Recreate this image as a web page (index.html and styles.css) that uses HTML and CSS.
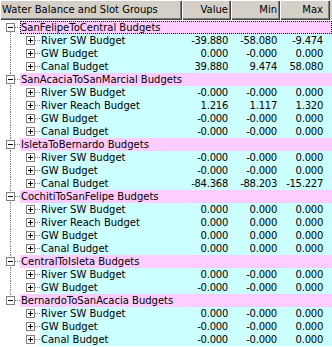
FILE: index.html
```html
<!DOCTYPE html>
<html>
<head>
<meta charset="utf-8">
<link rel="stylesheet" href="styles.css">
</head>
<body>
<div class="tree">
  <div class="hdr">
    <div class="hc name">Water Balance and Slot Groups</div>
    <div class="hc num">Value</div>
    <div class="hc num">Min</div>
    <div class="hc num last">Max</div>
    <div class="hc fill"></div>
  </div>
  <div class="body">
    <div class="row grp first">
      <div class="gut"><span class="exp"></span></div>
      <div class="cells sel"><span class="lbl">SanFelipeToCentral Budgets</span></div>
    </div>
    <div class="row item vl">
      <div class="gut"><span class="exp plus"></span></div>
      <div class="cells"><span class="lbl">River SW Budget</span><span class="v">-39.880</span><span class="v">-58.080</span><span class="v">-9.474</span></div>
    </div>
    <div class="row item vl">
      <div class="gut"><span class="exp plus"></span></div>
      <div class="cells"><span class="lbl">GW Budget</span><span class="v">0.000</span><span class="v">-0.000</span><span class="v">0.000</span></div>
    </div>
    <div class="row item vl">
      <div class="gut"><span class="exp plus"></span></div>
      <div class="cells"><span class="lbl">Canal Budget</span><span class="v">39.880</span><span class="v">9.474</span><span class="v">58.080</span></div>
    </div>

    <div class="row grp mid">
      <div class="gut"><span class="exp"></span></div>
      <div class="cells"><span class="lbl">SanAcaciaToSanMarcial Budgets</span></div>
    </div>
    <div class="row item vl">
      <div class="gut"><span class="exp plus"></span></div>
      <div class="cells"><span class="lbl">River SW Budget</span><span class="v">-0.000</span><span class="v">-0.000</span><span class="v">0.000</span></div>
    </div>
    <div class="row item vl">
      <div class="gut"><span class="exp plus"></span></div>
      <div class="cells"><span class="lbl">River Reach Budget</span><span class="v">1.216</span><span class="v">1.117</span><span class="v">1.320</span></div>
    </div>
    <div class="row item vl">
      <div class="gut"><span class="exp plus"></span></div>
      <div class="cells"><span class="lbl">GW Budget</span><span class="v">-0.000</span><span class="v">-0.000</span><span class="v">0.000</span></div>
    </div>
    <div class="row item vl">
      <div class="gut"><span class="exp plus"></span></div>
      <div class="cells"><span class="lbl">Canal Budget</span><span class="v">-0.000</span><span class="v">-0.000</span><span class="v">0.000</span></div>
    </div>

    <div class="row grp mid">
      <div class="gut"><span class="exp"></span></div>
      <div class="cells"><span class="lbl">IsletaToBernardo Budgets</span></div>
    </div>
    <div class="row item vl">
      <div class="gut"><span class="exp plus"></span></div>
      <div class="cells"><span class="lbl">River SW Budget</span><span class="v">-0.000</span><span class="v">-0.000</span><span class="v">0.000</span></div>
    </div>
    <div class="row item vl">
      <div class="gut"><span class="exp plus"></span></div>
      <div class="cells"><span class="lbl">GW Budget</span><span class="v">-0.000</span><span class="v">-0.000</span><span class="v">0.000</span></div>
    </div>
    <div class="row item vl">
      <div class="gut"><span class="exp plus"></span></div>
      <div class="cells"><span class="lbl">Canal Budget</span><span class="v">-84.368</span><span class="v">-88.203</span><span class="v">-15.227</span></div>
    </div>

    <div class="row grp mid">
      <div class="gut"><span class="exp"></span></div>
      <div class="cells"><span class="lbl">CochitiToSanFelipe Budgets</span></div>
    </div>
    <div class="row item vl">
      <div class="gut"><span class="exp plus"></span></div>
      <div class="cells"><span class="lbl">River SW Budget</span><span class="v">0.000</span><span class="v">0.000</span><span class="v">0.000</span></div>
    </div>
    <div class="row item vl">
      <div class="gut"><span class="exp plus"></span></div>
      <div class="cells"><span class="lbl">River Reach Budget</span><span class="v">0.000</span><span class="v">0.000</span><span class="v">0.000</span></div>
    </div>
    <div class="row item vl">
      <div class="gut"><span class="exp plus"></span></div>
      <div class="cells"><span class="lbl">GW Budget</span><span class="v">0.000</span><span class="v">0.000</span><span class="v">0.000</span></div>
    </div>
    <div class="row item vl">
      <div class="gut"><span class="exp plus"></span></div>
      <div class="cells"><span class="lbl">Canal Budget</span><span class="v">0.000</span><span class="v">0.000</span><span class="v">0.000</span></div>
    </div>

    <div class="row grp mid">
      <div class="gut"><span class="exp"></span></div>
      <div class="cells"><span class="lbl">CentralToIsleta Budgets</span></div>
    </div>
    <div class="row item vl">
      <div class="gut"><span class="exp plus"></span></div>
      <div class="cells"><span class="lbl">River SW Budget</span><span class="v">0.000</span><span class="v">-0.000</span><span class="v">0.000</span></div>
    </div>
    <div class="row item vl">
      <div class="gut"><span class="exp plus"></span></div>
      <div class="cells"><span class="lbl">GW Budget</span><span class="v">-0.000</span><span class="v">-0.000</span><span class="v">0.000</span></div>
    </div>

    <div class="row grp lastg">
      <div class="gut"><span class="exp"></span></div>
      <div class="cells"><span class="lbl">BernardoToSanAcacia Budgets</span></div>
    </div>
    <div class="row item">
      <div class="gut"><span class="exp plus"></span></div>
      <div class="cells"><span class="lbl">River SW Budget</span><span class="v">0.000</span><span class="v">-0.000</span><span class="v">0.000</span></div>
    </div>
    <div class="row item">
      <div class="gut"><span class="exp plus"></span></div>
      <div class="cells"><span class="lbl">GW Budget</span><span class="v">-0.000</span><span class="v">-0.000</span><span class="v">0.000</span></div>
    </div>
    <div class="row item">
      <div class="gut"><span class="exp plus"></span></div>
      <div class="cells"><span class="lbl">Canal Budget</span><span class="v">-0.000</span><span class="v">-0.000</span><span class="v">0.000</span></div>
    </div>
  </div>
</div>
</body>
</html>
```
FILE: styles.css
```css
html, body {
  margin: 0;
  padding: 0;
  background: #ffffff;
}

.tree {
  width: 332px;
  height: 347px;
  overflow: hidden;
  font-family: "DejaVu Sans", Verdana, sans-serif;
  font-size: 10px;
  color: #000;
  background: #fff;
}

.hdr {
  display: flex;
  height: 20px;
}

.hc {
  box-sizing: border-box;
  height: 20px;
  line-height: 20px;
  background: #d4d0c8;
  box-shadow: inset 1px 1px #ffffff, inset -1px -1px #404040, inset -2px -2px #808080;
  white-space: nowrap;
  overflow: hidden;
}

.hc.name { width: 182px; padding-left: 2px; }
.hc.num { width: 49px; text-align: right; padding-right: 3px; }
.hc.num.last { width: 50px; padding-right: 7px; }
.hc.fill { flex: 1; box-shadow: none; background: #d4d0c8; }

.body {
  padding-top: 1px;
}

.row {
  display: flex;
  height: 13px;
  line-height: 13px;
}

.gut {
  box-sizing: border-box;
  display: flex;
  align-items: flex-start;
  padding-top: 2px;
  background-repeat: no-repeat;
}

.grp .gut {
  width: 20px;
  padding-left: 6px;
  background-image:
    repeating-linear-gradient(to bottom, #808080 0 1px, transparent 1px 2px),
    repeating-linear-gradient(to right, #808080 0 1px, transparent 1px 2px);
  background-size: 1px 13px, 5px 1px;
  background-position: 10px 0, 15px 6px;
}

.grp.first .gut {
  background-size: 1px 6px, 5px 1px;
  background-position: 10px 7px, 15px 6px;
}

.grp.lastg .gut {
  background-size: 1px 6px, 5px 1px;
  background-position: 10px 0, 15px 6px;
}

.item .gut {
  width: 40px;
  padding-left: 26px;
  background-image:
    repeating-linear-gradient(to right, #808080 0 1px, transparent 1px 2px);
  background-size: 5px 1px;
  background-position: 35px 6px;
}

.item.vl .gut {
  background-image:
    repeating-linear-gradient(to bottom, #808080 0 1px, transparent 1px 2px),
    repeating-linear-gradient(to right, #808080 0 1px, transparent 1px 2px);
  background-size: 1px 13px, 5px 1px;
  background-position: 10px 0, 35px 6px;
}

.exp {
  box-sizing: border-box;
  display: block;
  position: relative;
  width: 9px;
  height: 9px;
  border: 1px solid #808080;
  background: #fff;
}

.exp::before {
  content: "";
  position: absolute;
  left: 1px;
  top: 3px;
  width: 5px;
  height: 1px;
  background: #000;
}

.exp.plus::after {
  content: "";
  position: absolute;
  left: 3px;
  top: 1px;
  width: 1px;
  height: 5px;
  background: #000;
}

.cells {
  flex: 1;
  display: grid;
  white-space: nowrap;
}

.grp .cells {
  background: #ffccff;
  grid-template-columns: 1fr;
}

.item .cells {
  background: #ccffff;
  grid-template-columns: 142px 49px 49px 46px 1fr;
}

.cells.sel {
  outline: 1px dotted #000;
  outline-offset: -1px;
}

.lbl {
  padding-left: 1px;
  overflow: visible;
}

.v {
  text-align: right;
  padding-right: 3px;
  letter-spacing: -0.25px;
}
```
